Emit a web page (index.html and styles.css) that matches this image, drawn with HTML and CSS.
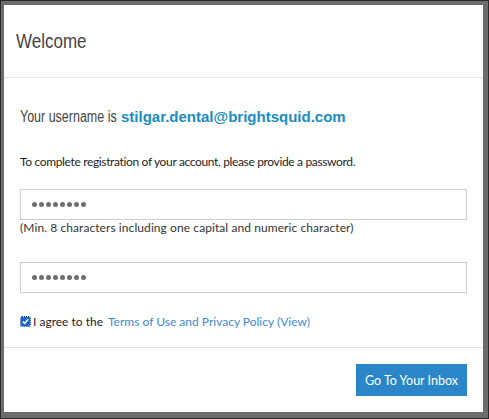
FILE: index.html
```html
<!DOCTYPE html>
<html>
<head>
<meta charset="utf-8">
<link rel="stylesheet" href="styles.css">
</head>
<body>
<div class="frame">
  <div class="panel">
    <div class="header"><h1 class="title">Welcome</h1></div>
    <div class="content">
      <div class="username"><span class="narrow">Your username is</span><span class="email">stilgar.dental@brightsquid.com</span></div>
      <p class="intro">To complete registration of your account, please provide a password.</p>
      <div class="field" aria-label="password"><span class="dot"></span><span class="dot"></span><span class="dot"></span><span class="dot"></span><span class="dot"></span><span class="dot"></span><span class="dot"></span><span class="dot"></span></div>
      <div class="hint">(Min. 8 characters including one capital and numeric character)</div>
      <div class="field field2" aria-label="confirm password"><span class="dot"></span><span class="dot"></span><span class="dot"></span><span class="dot"></span><span class="dot"></span><span class="dot"></span><span class="dot"></span><span class="dot"></span></div>
      <label class="agree"><span class="check"><svg width="9" height="9" viewBox="0 0 9 9"><path d="M1.8 4.6 L3.7 6.5 L7.2 2.3" fill="none" stroke="#fff" stroke-width="1.5"/></svg></span><span class="agree-text">I agree to the</span><a class="link">Terms of Use and Privacy Policy (View)</a></label>
    </div>
    <div class="footer"><button class="btn">Go To Your Inbox</button></div>
  </div>
</div>
</body>
</html>
```
FILE: styles.css
```css
html, body { margin: 0; padding: 0; }
body { width: 489px; height: 419px; overflow: hidden; }
.frame {
  box-sizing: border-box;
  width: 489px; height: 419px;
  border: 1px solid #2a2a2a;
  background: #6c6c6c;
  padding: 4px 5px 6px 3px;
  display: flex;
}
.panel {
  flex: 1;
  background: #fff;
  display: flex;
  flex-direction: column;
}
.header {
  height: 72px;
  flex-shrink: 0;
  border-bottom: 1px solid #e5e5e5;
  display: flex;
  align-items: center;
  padding-left: 12px;
}
.title {
  margin: 0;
  font-family: "Liberation Sans", Arial, sans-serif;
  font-weight: normal;
  font-size: 20px;
  color: #444;
  display: inline-block;
  transform: scaleX(0.85);
  transform-origin: left center;
  padding-top: 1px;
}
.content {
  flex: 1;
  padding: 29px 16px 0 16px;
  font-family: Lato, "Open Sans", sans-serif;
}
.username {
  display: flex;
  align-items: baseline;
  line-height: 20px;
  white-space: nowrap;
}
.narrow {
  font-family: "Liberation Sans", Arial, sans-serif;
  font-size: 16px;
  color: #444;
  display: inline-block;
  transform: scaleX(0.78);
  transform-origin: left center;
  width: 101px;
  flex-shrink: 0;
}
.email {
  font-family: "Liberation Sans", Arial, sans-serif;
  font-weight: bold;
  font-size: 15px;
  color: #1a8dbf;
}
.intro {
  margin: 26px 0 0 0;
  font-size: 12px;
  letter-spacing: -0.35px;
  line-height: 18px;
  color: #1e1e1e;
  white-space: nowrap;
}
.field {
  box-sizing: border-box;
  margin-top: 18px;
  height: 31px;
  border: 1px solid #cccccc;
  display: flex;
  align-items: center;
  gap: 2px;
  padding-left: 11px;
}
.field2 { margin-top: 26px; }
.dot {
  width: 5px; height: 5px;
  border-radius: 50%;
  background: #6e6e6e;
}
.hint {
  font-size: 12px;
  letter-spacing: 0.08px;
  line-height: 16px;
  color: #333;
  white-space: nowrap;
}
.agree {
  margin-top: 18px;
  display: flex;
  align-items: center;
  height: 20px;
  font-size: 12px;
  color: #2a1a1a;
  white-space: nowrap;
}
.check {
  width: 9px; height: 9px;
  background: #1565d8;
  border-radius: 1px;
  outline: 1px dotted #0a2a6a;
  display: inline-flex;
  align-items: center;
  justify-content: center;
  margin: 0 3px 0 1px;
}
.agree-text { margin-right: 5px; }
.link { color: #3a8ad8; }
.footer {
  flex-shrink: 0;
  border-top: 1px solid #e5e5e5;
  padding: 16px;
  display: flex;
  justify-content: flex-end;
}
.btn {
  height: 32px;
  width: 111px;
  border: none;
  background: #2a86c9;
  color: #fff;
  font-family: Lato, "Open Sans", sans-serif;
  font-size: 12.5px;
  padding: 0;
}
```
